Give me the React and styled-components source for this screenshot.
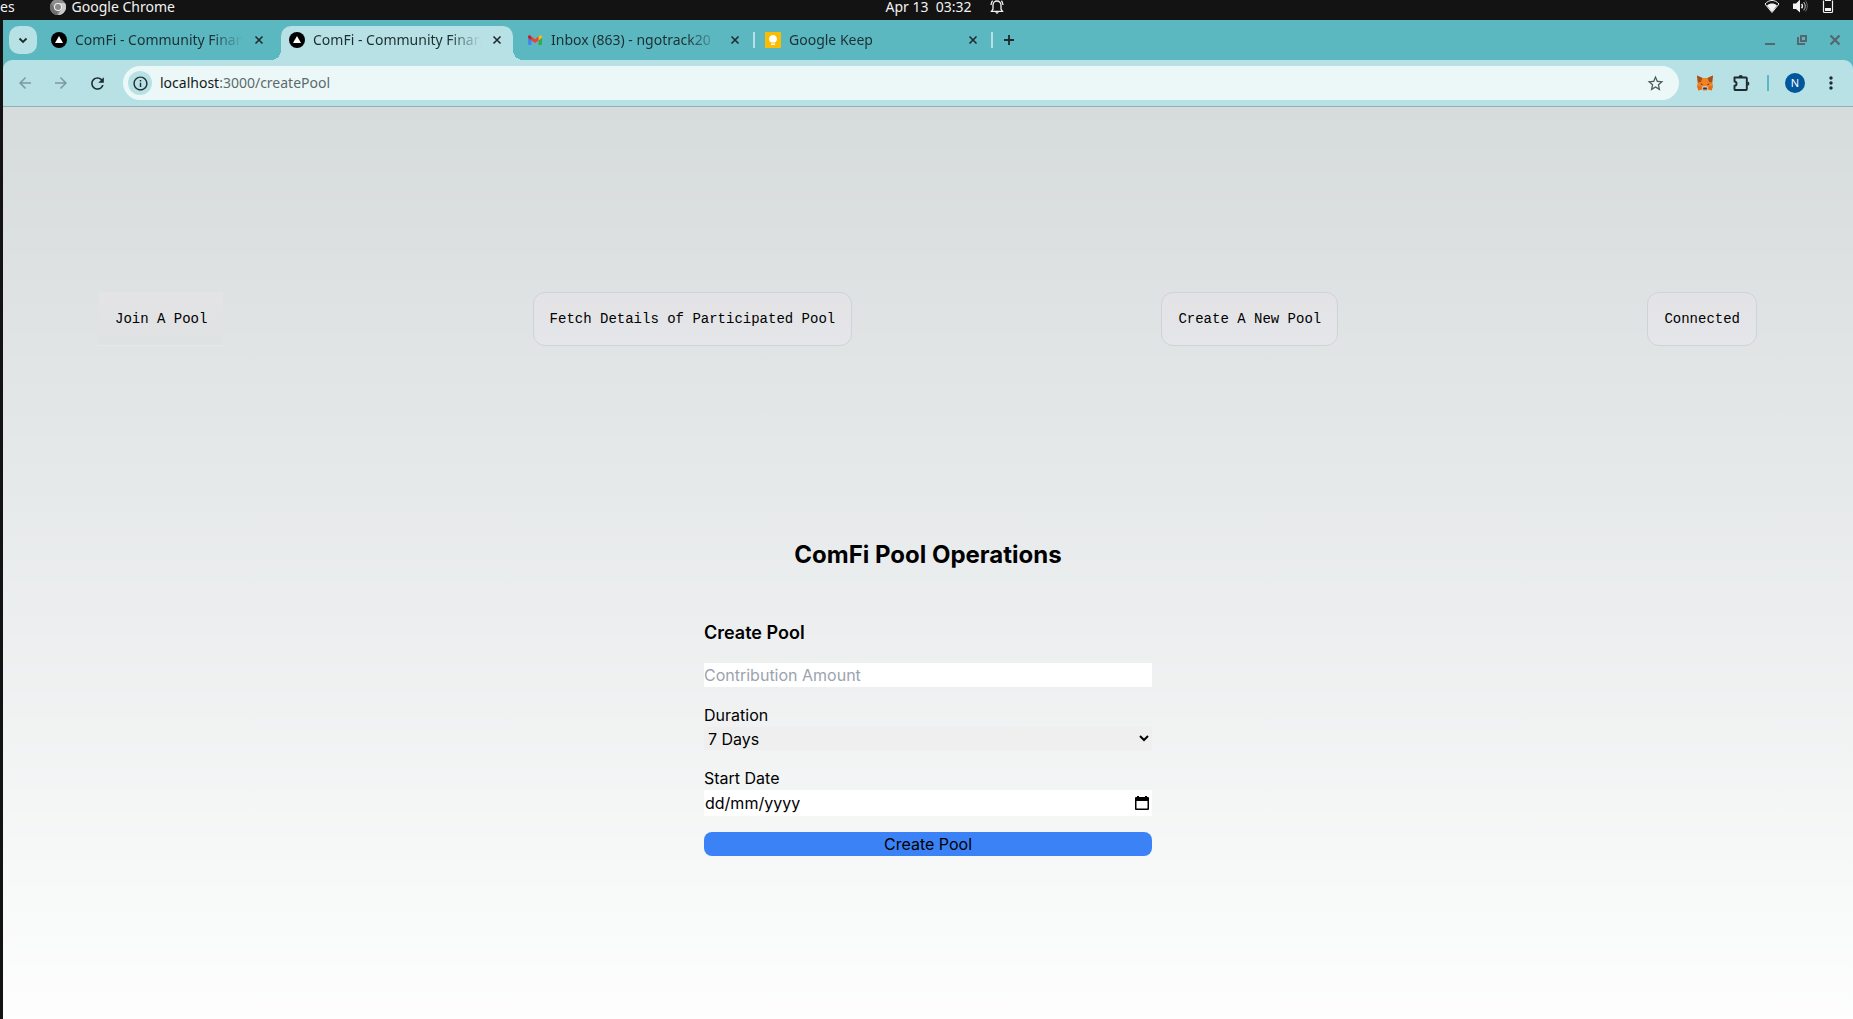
import React, { useState } from 'react'
import styled, { createGlobalStyle, css } from 'styled-components'
import { MdArrowBack, MdArrowForward, MdInfoOutline, MdMoreVert, MdRefresh, MdStarBorder } from 'react-icons/md'

const GlobalStyle = createGlobalStyle`
* {
box-sizing: border-box;
}
body {
margin: 0;
font-family: Inter, sans-serif;
font-size: 16px;
line-height: 24px;
color: #000;
background: #131313;
}
button, input, select {
font: inherit;
color: inherit;
margin: 0;
padding: 0;
border: none;
border-radius: 0;
}
svg {
display: block;
flex: none;
}
`

const Desktop = styled.div`
display: flex;
flex-direction: column;
min-height: 100vh;
`

// top bar of the desktop

const SystemBar = styled.div`
display: grid;
grid-template-columns: 1fr auto 1fr;
align-items: start;
height: 20px;
color: #f2f2f2;
font-family: 'Noto Sans', sans-serif;
font-size: 14px;
line-height: 14px;
`

const Menus = styled.div`
display: flex;
align-items: center;
gap: 35px;
height: 14px;
`

const AppMenu = styled.div`
display: flex;
align-items: center;
gap: 6px;
`

const Clock = styled.div`
display: flex;
align-items: center;
gap: 18px;
height: 14px;
padding-left: 36px;
white-space: pre;
`

const Tray = styled.div`
display: flex;
justify-content: flex-end;
align-items: center;
gap: 12px;
padding-right: 17px;
`

// browser window

const Window = styled.div`
display: flex;
flex-direction: column;
flex: 1;
margin-left: 3px;
background: #5bb8c1;
`

const TabStrip = styled.div`
display: flex;
align-items: center;
height: 40px;
padding: 6px 8px 0 6px;
color: #1d2f33;
font-family: 'Noto Sans', sans-serif;
font-size: 14px;
`

const IconButton = styled.button`
display: flex;
align-items: center;
justify-content: center;
width: ${props => props.$size || 16}px;
height: ${props => props.$size || 16}px;
background: none;
color: ${props => props.$color || '#1f2b2e'};
`

const TabSearch = styled(IconButton)`
align-self: flex-start;
margin-right: 6px;
border-radius: 10px;
background: #b7e1e5;
`

const Tab = styled.div`
position: relative;
display: flex;
align-items: center;
gap: 8px;
width: 232px;
height: 34px;
padding: 0 8px 6px;
margin-right: 6px;
border-radius: 10px 10px 0 0;
${props => props.$active && css`
background: #b7e1e5;
&::before, &::after {
content: '';
position: absolute;
bottom: 0;
width: 10px;
height: 10px;
}
&::before {
right: 100%;
background: radial-gradient(circle at 0 0, transparent 10px, #b7e1e5 10px);
}
&::after {
left: 100%;
background: radial-gradient(circle at 100% 0, transparent 10px, #b7e1e5 10px);
}
`}
${props => props.$divider && css`
&::after {
content: '';
position: absolute;
top: 6px;
right: -4px;
width: 2px;
height: 16px;
background: #b7e1e5;
}
`}
`

const TabTitle = styled.span`
flex: 1;
min-width: 0;
overflow: hidden;
white-space: nowrap;
line-height: 24px;
mask-image: linear-gradient(to right, #000 calc(100% - 32px), transparent);
`

const WindowButtons = styled.div`
display: flex;
gap: 16px;
margin-left: auto;
padding-bottom: 6px;
padding-right: 2px;
`

const NewTab = styled.div`
padding-bottom: 6px;
margin-left: 6px;
`

const Toolbar = styled.div`
display: flex;
align-items: center;
height: 47px;
padding: 0 12px;
background: #b7e1e5;
border-bottom: 1px solid #8fb0b5;
border-radius: 9px 9px 0 0;
`

const NavButtons = styled.div`
display: flex;
gap: 16px;
margin-right: 16px;
`

const AddressBar = styled.div`
display: flex;
align-items: center;
flex: 1;
height: 34px;
padding: 0 14px 0 5px;
border-radius: 17px;
background: #ecf8f8;
`

const SiteInfo = styled(IconButton)`
border-radius: 50%;
background: #b7e1e5;
margin-right: 8px;
`

const Address = styled.div`
flex: 1;
color: #5d6a6c;
font-family: 'Noto Sans', sans-serif;
font-size: 14px;

b {
color: #14191a;
font-weight: 400;
}
`

const Extensions = styled.div`
display: flex;
align-items: center;
gap: 16px;
padding-left: 16px;
`

const Divider = styled.div`
width: 2px;
height: 16px;
background: #5bb8c1;
`

const Avatar = styled.button`
width: 20px;
height: 20px;
border-radius: 50%;
background: #02569b;
color: #fff;
font-family: 'Noto Sans', sans-serif;
font-size: 11px;
line-height: 20px;
`

// page

const Main = styled.main`
display: flex;
flex-direction: column;
align-items: center;
flex: 1;
padding: 185px 96px 96px;
background: linear-gradient(to bottom, transparent, #fff 104%) #d6dbdc;
`

const Nav = styled.nav`
display: flex;
justify-content: space-between;
width: 100%;
margin-bottom: 193px;
`

const NavButton = styled.button`
padding: 16px;
border: 1px solid #ced3db;
border-radius: 12px;
background: linear-gradient(#e3e3e5, #e5e6ea);
font-family: 'Liberation Mono', monospace;
font-size: 14px;
line-height: 20px;
${props => props.$plain && css`
border-width: 0 0 1px;
border-color: #e6e9e9;
border-radius: 0;
background: linear-gradient(#e4e4e6, #e1e2e4 60%, #dfe2e3 90%);
`}
`

const Title = styled.h1`
margin: 0 0 48px;
font-size: 24px;
font-weight: 700;
line-height: 32px;
`

const Form = styled.form`
display: flex;
flex-direction: column;
gap: 16px;
width: 100%;
max-width: 448px;
`

const FormTitle = styled.h2`
margin: 0;
font-size: 18px;
font-weight: 600;
line-height: 28px;
`

const Field = styled.div`
display: flex;
flex-direction: column;
`

const Input = styled.input`
width: 100%;
height: 24px;
background: #fff;
&::placeholder {
color: #9ca3af;
opacity: 1;
}
`

const Select = styled.select`
height: 23px;
background: #efefef;
`

const DateBox = styled.div`
display: flex;
align-items: center;
height: 26px;
padding: 0 2px 0 1px;
background: #fff;
`

const DateInput = styled(Input)`
flex: 1;
&::placeholder {
color: #000;
}
&::-webkit-calendar-picker-indicator {
display: none;
}
`

const Submit = styled.button`
height: 24px;
border-radius: 8px;
background: #3b82f6;
`

const tabs = [
    { title: 'ComFi - Community Finan', icon: 'comfi' },
    { title: 'ComFi - Community Finan', icon: 'comfi', active: true },
    { title: 'Inbox (863) - ngotrack20', icon: 'mail', divider: true },
    { title: 'Google Keep', icon: 'keep', divider: true },
]

const links = ['Join A Pool', 'Fetch Details of Participated Pool', 'Create A New Pool', 'Connected']

const favicons = {
    comfi: (
        <svg width="16" height="16" viewBox="0 0 16 16">
            <circle cx="8" cy="8" r="8" fill="#000" />
            <path d="M8 4l4 7H4z" fill="#fff" />
        </svg>
    ),
    mail: (
        <svg width="16" height="16" viewBox="0 0 16 16">
            <path d="M1 5.5l3.5 2.7V13H2a1 1 0 0 1-1-1z" fill="#4285f4" />
            <path d="M15 5.500l-3.500 2.700V13H14a1 1 0 0 0 1-1z" fill="#34a853" />
            <path d="M11.500 4.500l1-.8C13.600 2.800 15 3.500 15 4.700v1l-3.500 2.700z" fill="#fbbc04" />
            <path d="M4.500 4.500L8 7.200l3.500-2.700v3.900L8 11 4.500 8.400z" fill="#ea4335" />
            <path d="M1 4.700c0-1.200 1.400-1.900 2.500-1l1 .8v3.900L1 5.700z" fill="#c5221f" />
        </svg>
    ),
    keep: (
        <svg width="16" height="16" viewBox="0 0 16 16">
            <rect width="16" height="16" rx="1" fill="#fbbc04" />
            <path d="M8 3a4 4 0 0 0-2 7.400h4A4 4 0 0 0 8 3zM6 11.500h4V13H6z" fill="#fff" />
        </svg>
    ),
}

const Cross = () => (
    <svg width="16" height="16" viewBox="0 0 16 16" fill="none" stroke="currentColor" strokeWidth="1.6">
        <path d="M4.500 4.500l7 7M11.500 4.500l-7 7" />
    </svg>
)

const ChromeIcon = () => (
    <svg width="16" height="16" viewBox="0 0 16 16">
        <circle cx="8" cy="8" r="8" fill="#8d8d8d" />
        <path d="M8 4h7a8 8 0 0 1-7 12l3.500-6z" fill="#c9c9c9" />
        <path d="M1.100 4L4.600 10 8 12l-1.500 4A8 8 0 0 1 1.100 4z" fill="#6f6f6f" />
        <circle cx="8" cy="8" r="4" fill="#eee" />
        <circle cx="8" cy="8" r="3" fill="#8a8a8a" />
    </svg>
)

const Bell = () => (
    <svg width="14" height="14" viewBox="0 0 14 14" fill="none" stroke="currentColor" strokeWidth="1.300">
        <path d="M1.500 11.300h11L11 9V5a4 4 0 0 0-8 0v4zM1 5c0-2 .6-3.200 1.600-4.300M13 5c0-2-.6-3.200-1.600-4.300" />
        <path d="M5 12.300h4L7 14z" fill="currentColor" stroke="none" />
    </svg>
)

const Wifi = () => (
    <svg width="16" height="14" viewBox="0 0 16 14">
        <path d="M1 4C5-.7 11-.7 15 4L8 12.500z" fill="none" stroke="currentColor" />
        <path d="M3 5.500c3-2.600 7-2.600 10 0L8 12z" fill="currentColor" />
    </svg>
)

const Volume = () => (
    <svg width="16" height="14" viewBox="0 0 16 14" fill="none" stroke="currentColor">
        <path d="M1 3.500h3l4-4v13L4 9H1z" fill="currentColor" stroke="none" />
        <path d="M9.500 4c1.200 1.200 1.200 3 0 4.200" strokeWidth="1.500" />
        <path d="M11.500 2c2.300 2.300 2.300 6 0 8.300" opacity=".8" />
        <path d="M13.300 .5c2.600 3 2.600 8 0 11" opacity=".4" />
    </svg>
)

const Battery = () => (
    <svg width="16" height="14" viewBox="0 0 16 14">
        <path d="M3.500 .5v11a1 1 0 0 0 1 1h7a1 1 0 0 0 1-1V.5M5 .5h6" fill="none" stroke="currentColor" strokeWidth="1.200" />
        <path d="M5 8h6v3H5z" fill="currentColor" />
    </svg>
)

const Fox = () => (
    <svg width="18" height="16" viewBox="0 0 18 16">
        <path d="M1 .5L6.500 3h5L17 .5 16.200 7l.8 4-1.500 4.500-3.500-1-1.500 1h-3l-1.500-1-3.500 1L1 11l.8-4z" fill="#f58220" />
        <path d="M1 .5L6.500 3 5 7l-3.200.5zM17 .5L11.500 3 13 7l3.200.5z" fill="#a3521c" />
        <path d="M1 11h4l1 3-3.500 1.500zM17 11h-4l-1 3 3.500 1.500z" fill="#e0701c" />
        <path d="M6 12l1.500-1h3l1.500 1-.5 3h-5z" fill="#d9c4b0" />
        <path d="M7.300 12.500h3.400l.3 2H7zM4.500 8l2.800 2-2-.2zM13.500 8l-2.800 2 2-.2z" fill="#233447" />
    </svg>
)

const Puzzle = () => (
    <svg width="20" height="20" viewBox="0 0 20 20">
        <path
            d="M3.500 4.500H15a.8.8 0 0 1 .8.800V16.200a.8.8 0 0 1-.8.800H4.300a.8.8 0 0 1-.8-.8v-3.400c2.700-.3 2.700-4 0-4.300z"
            fill="none"
            stroke="currentColor"
            strokeWidth="1.900"
            strokeLinejoin="round"
        />
        <path d="M7.600 4a2.100 2.100 0 0 1 4.200 0zM16.300 8.600a2.100 2.100 0 0 1 0 4.200z" fill="currentColor" />
    </svg>
)

const Calendar = () => (
    <svg width="16" height="16" viewBox="0 0 16 16">
        <path d="M3 1h2v1h6V1h2v1h1a1 1 0 0 1 1 1v11a1 1 0 0 1-1 1H2a1 1 0 0 1-1-1V3a1 1 0 0 1 1-1h1zM2.500 6v7.500h11V6z" fill="#000" fillRule="evenodd" />
    </svg>
)

const Browser = ({ children }) => (
    <Window>
        <TabStrip>
            <TabSearch $size={28} aria-label="Search tabs">
                <svg width="16" height="16" viewBox="0 0 16 16" fill="none" stroke="currentColor" strokeWidth="1.800">
                    <path d="M4.500 6.500L8 10l3.500-3.500" />
                </svg>
            </TabSearch>
            {tabs.map((tab, i) => (
                <Tab key={i} $active={tab.active} $divider={tab.divider}>
                    {favicons[tab.icon]}
                    <TabTitle>{tab.title}</TabTitle>
                    <IconButton aria-label="Close tab"><Cross /></IconButton>
                </Tab>
            ))}
            <NewTab>
                <IconButton aria-label="New tab">
                    <svg width="16" height="16" viewBox="0 0 16 16" fill="none" stroke="currentColor" strokeWidth="1.800">
                        <path d="M8 3v10M3 8h10" />
                    </svg>
                </IconButton>
            </NewTab>
            <WindowButtons>
                <IconButton $color="#55666c" aria-label="Minimize">
                    <svg width="16" height="16" viewBox="0 0 16 16"><path d="M2 11h10v2H2z" fill="currentColor" /></svg>
                </IconButton>
                <IconButton $color="#55666c" aria-label="Restore">
                    <svg width="16" height="16" viewBox="0 0 16 16" fill="none" stroke="currentColor" strokeWidth="2">
                        <path d="M6 4h5v5H6zM3 5v7h7" />
                    </svg>
                </IconButton>
                <IconButton $color="#55666c" aria-label="Close">
                    <svg width="16" height="16" viewBox="0 0 16 16" fill="none" stroke="currentColor" strokeWidth="2.200">
                        <path d="M3.500 3.500l9 9M12.500 3.500l-9 9" />
                    </svg>
                </IconButton>
            </WindowButtons>
        </TabStrip>
        <Toolbar>
            <NavButtons>
                <IconButton $size={20} $color="#7c999d" aria-label="Back"><MdArrowBack size={18} /></IconButton>
                <IconButton $size={20} $color="#7c999d" aria-label="Forward"><MdArrowForward size={18} /></IconButton>
                <IconButton $size={20} aria-label="Reload"><MdRefresh size={19} /></IconButton>
            </NavButtons>
            <AddressBar>
                <SiteInfo $size={24} aria-label="Site information"><MdInfoOutline size={17} /></SiteInfo>
                <Address><b>localhost</b>:3000/createPool</Address>
                <IconButton $size={20} $color="#4d5b5d" aria-label="Bookmark"><MdStarBorder size={19} /></IconButton>
            </AddressBar>
            <Extensions>
                <IconButton $size={20} aria-label="MetaMask"><Fox /></IconButton>
                <IconButton $size={20} aria-label="Extensions"><Puzzle /></IconButton>
                <Divider />
                <Avatar>N</Avatar>
                <IconButton $size={20} aria-label="Menu"><MdMoreVert size={20} /></IconButton>
            </Extensions>
        </Toolbar>
        {children}
    </Window>
)

const CreatePool = () => {
    const [amount, setAmount] = useState('')
    const [duration, setDuration] = useState('7')
    const [startDate, setStartDate] = useState('')
    const [picking, setPicking] = useState(false)

    return (
        <Form onSubmit={(e) => e.preventDefault()}>
            <FormTitle>Create Pool</FormTitle>
            <Input
                type="text"
                aria-label="Contribution Amount"
                placeholder="Contribution Amount"
                value={amount}
                onChange={(e) => setAmount(e.target.value)}
            />
            <Field>
                <label htmlFor="duration">Duration</label>
                <Select id="duration" value={duration} onChange={(e) => setDuration(e.target.value)}>
                    <option value="7">7 Days</option>
                    <option value="14">14 Days</option>
                    <option value="30">30 Days</option>
                </Select>
            </Field>
            <Field>
                <label htmlFor="startDate">Start Date</label>
                <DateBox>
                    {/* a text box until it is focused, so the placeholder does not depend on the locale */}
                    <DateInput
                        id="startDate"
                        type={picking || startDate ? 'date' : 'text'}
                        placeholder="dd/mm/yyyy"
                        value={startDate}
                        onFocus={() => setPicking(true)}
                        onBlur={() => setPicking(false)}
                        onChange={(e) => setStartDate(e.target.value)}
                    />
                    <IconButton type="button" aria-label="Pick a date" onClick={() => setPicking(true)}><Calendar /></IconButton>
                </DateBox>
            </Field>
            <Submit type="submit">Create Pool</Submit>
        </Form>
    )
}

const App = () => {
    return (
        <Desktop>
            <GlobalStyle />
            <SystemBar>
                <Menus>
                    <span>es</span>
                    <AppMenu><ChromeIcon />Google Chrome</AppMenu>
                </Menus>
                <Clock>{'Apr 13  03:32'}<Bell /></Clock>
                <Tray><Wifi /><Volume /><Battery /></Tray>
            </SystemBar>
            <Browser>
                <Main>
                    <Nav>
                        {links.map((link, i) => (
                            <NavButton key={link} $plain={i === 0}>{link}</NavButton>
                        ))}
                    </Nav>
                    <Title>ComFi Pool Operations</Title>
                    <CreatePool />
                </Main>
            </Browser>
        </Desktop>
    )
}

export default App
